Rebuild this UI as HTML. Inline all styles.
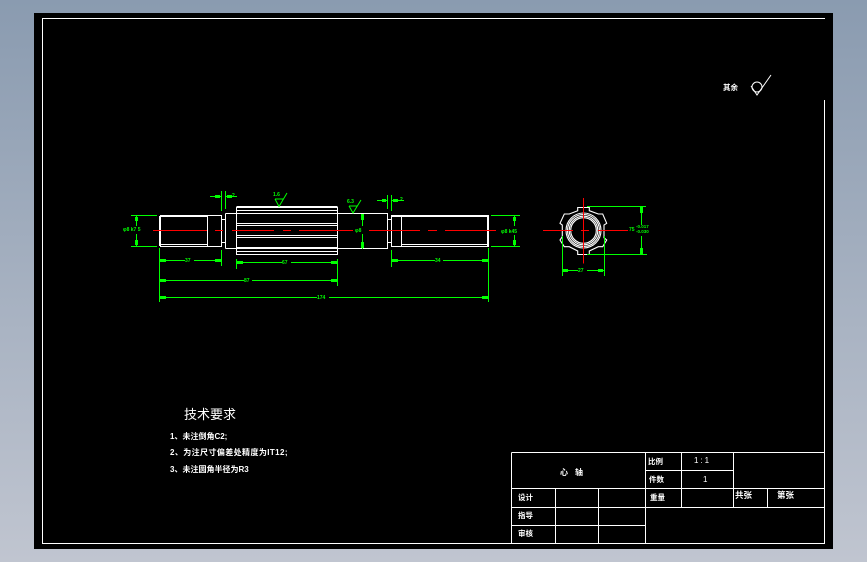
<!DOCTYPE html>
<html><head><meta charset="utf-8">
<style>
html,body{margin:0;padding:0;width:867px;height:562px;overflow:hidden;background:linear-gradient(#8a9bb0,#c0c5d0)}
svg{position:absolute;left:0;top:0;display:block}
text{font-family:"Liberation Sans","Noto Sans CJK SC",sans-serif}
</style></head>
<body>
<svg width="867" height="562" viewBox="0 0 867 562" xmlns="http://www.w3.org/2000/svg">
<rect x="34" y="13" width="799" height="536" fill="#000"/>
<g fill="none" stroke="#fff" stroke-width="1" shape-rendering="crispEdges">
<path d="M42.5 544V18.5H825M824.5 100V543.5H42"/>
<!-- title block -->
<path d="M511.5 452.5H824.5M511.5 452.5V543.5M645.5 452.5V543.5M681.5 452.5V507M733.5 452.5V507M645.5 470.5H733.5M511.5 488.5H824.5M511.5 507.5H824.5M511.5 525.5H645.5M555.5 488.5V543.5M598.5 488.5V543.5M767.5 488.5V507"/>
<!-- shaft -->
<path d="M160.5 215.5H221.5V246.5H160.5ZM160 216.5H207M160 244.5H207M207.5 216V246M159.5 216V246M221.5 219.5H225.5M221.5 242.5H225.5M225.5 213.5V248.5M225.5 213.5H387.5V248.5H225.5"/>
<path d="M236.5 207.5H337.5V254.5H236.5ZM236.5 206.5H337.5M236.5 210.5H337.5M236.5 223.5H337.5M236.5 225.5H337.5M236.5 235.5H337.5M236.5 237.5H337.5M236.5 247.5H337.5M236.5 251.5H337.5"/>
<path d="M387.5 219.5H391.5M387.5 242.5H391.5M391.5 215.5H488.5V246.5H391.5ZM391 216.5H488M401.5 216V246M401.5 244.5H488M487.5 216V246"/>
</g>
<!-- section view -->
<g fill="none" stroke="#fff" stroke-width="1.1">
<path d="M577.7 207.5H589.3V210.7L598.3 214H602.7L606.7 223.3L604 225V237.7L606.7 240L602.7 246.7H598.3L589.3 251V254.5H577.7V251L569.3 246.7H564.3L560 240L562.3 236.7V225L560 223.3L564.3 214H569.3L577.7 210.7Z"/>
<circle cx="583.5" cy="230.5" r="17.5"/>
<circle cx="583.5" cy="230.5" r="16"/>
<circle cx="583.5" cy="230.5" r="14.3"/>
<circle cx="583.5" cy="230.5" r="12.8"/>
</g>
<!-- centre lines -->
<g fill="none" stroke="#f00" stroke-width="1" shape-rendering="crispEdges">
<path d="M153 230.5H207M215 230.5H223M232 230.5H274M283 230.5H291M299 230.5H353M369 230.5H420M428 230.5H437M445 230.5H496"/>
<path d="M543 230.5H573M581 230.5H589M598 230.5H628M583.5 198V263.5"/>
</g>
<!-- dimensions -->
<g fill="none" stroke="#0f0" stroke-width="1" shape-rendering="crispEdges">
<path d="M131 215.5H157M131 246.5H157M136.5 216V226M136.5 234V246"/>
<path d="M491 215.5H520M491 246.5H520M514.5 216V226M514.5 235V246"/>
<path d="M221.5 191V211M225.5 191V209M210 196.5H221M226 196.5H237"/>
<path d="M387.5 195V209M391.5 195V211M377 200.5H387M392 200.5H404"/>
<path d="M159.5 248V302M221.5 250V266M160 260.5H185M194 260.5H221"/>
<path d="M236.5 259V269M337.5 259V286M237 262.5H282M291 262.5H337"/>
<path d="M160 280.5H244M252 280.5H337M160 297.5H317M329 297.5H488M488.5 248V302"/>
<path d="M391.5 250V267M392 260.5H435M443 260.5H488"/>
<path d="M362.5 214V226M362.5 234V249"/>
<path d="M587 206.5H646M587 254.5H647M641.5 207V225M641.5 236V254"/>
<path d="M562.5 236V276M604.5 236V276M563 270.5H578M587 270.5H604"/>
</g>
<g fill="#0f0" shape-rendering="crispEdges">
<rect x="135" y="217" width="3" height="4"/><rect x="135" y="240" width="3" height="5"/>
<rect x="513" y="217" width="3" height="4"/><rect x="513" y="240" width="3" height="5"/>
<rect x="215" y="195" width="5" height="3"/><rect x="227" y="195" width="5" height="3"/>
<rect x="382" y="199" width="4" height="3"/><rect x="393" y="199" width="5" height="3"/>
<rect x="160" y="259" width="6" height="3"/><rect x="215" y="259" width="6" height="3"/>
<rect x="237" y="261" width="6" height="3"/><rect x="331" y="261" width="6" height="3"/>
<rect x="160" y="279" width="6" height="3"/><rect x="331" y="279" width="6" height="3"/>
<rect x="160" y="296" width="6" height="3"/><rect x="482" y="296" width="6" height="3"/>
<rect x="392" y="259" width="6" height="3"/><rect x="482" y="259" width="6" height="3"/>
<rect x="361" y="214" width="3" height="6"/><rect x="361" y="242" width="3" height="6"/>
<rect x="640" y="207" width="3" height="6"/><rect x="640" y="248" width="3" height="6"/>
<rect x="563" y="269" width="5" height="3"/><rect x="598" y="269" width="5" height="3"/>
</g>
<!-- roughness marks -->
<g fill="none" stroke="#0f0" stroke-width="1">
<path d="M275 199H283M275 199L279 206.500L287 193"/>
<path d="M349 206H357M349 206L353 213L361 200"/>
</g>
<g fill="#0f0" font-size="5" font-weight="bold">
<text x="123" y="231">φ8 k7 5</text>
<text x="501" y="233">φ8 k45</text>
<text x="355" y="232">φ8</text>
<text x="185" y="262">37</text>
<text x="282" y="264">67</text>
<text x="244" y="282">87</text>
<text x="317" y="299">174</text>
<text x="435" y="262">34</text>
<text x="273" y="196">1.6</text>
<text x="347" y="203">6.3</text>
<text x="232" y="197">2</text>
<text x="400" y="201">2</text>
<text x="578" y="272">27</text>
<text x="629" y="231">75</text>
<text x="636" y="228" font-size="4.500">-0.017</text>
<text x="636" y="233" font-size="4.500">-0.030</text>
</g>
<!-- general roughness -->
<g fill="none" stroke="#fff" stroke-width="1">
<circle cx="757" cy="87" r="5"/>
<path d="M751 86L757 95L771 75"/>
</g>
<g fill="#fff" font-weight="bold">
<text x="723" y="90" font-size="7.500">其余</text>
<text x="184" y="419" font-size="13" letter-spacing="0" font-weight="normal">技术要求</text>
<text x="170" y="439" font-size="8">1、未注倒角C2;</text>
<text x="170" y="455" font-size="8" letter-spacing=".4">2、为注尺寸偏差处精度为IT12;</text>
<text x="170" y="472" font-size="8">3、未注圆角半径为R3</text>
<text x="560" y="475" font-size="8" letter-spacing="7">心轴</text>
<text x="648" y="464" font-size="7.500">比例</text>
<text x="694" y="463" font-size="8" letter-spacing="2" font-weight="normal">1:1</text>
<text x="649" y="482" font-size="7.500">件数</text>
<text x="703" y="482" font-size="8" font-weight="normal">1</text>
<text x="518" y="500" font-size="7.500">设计</text>
<text x="650" y="500" font-size="7.500">重量</text>
<text x="735" y="498" font-size="8.500">共张</text>
<text x="777" y="498" font-size="8.500">第张</text>
<text x="518" y="518" font-size="7.500">指导</text>
<text x="518" y="536" font-size="7.500">审核</text>
</g>
</svg>
</body></html>
